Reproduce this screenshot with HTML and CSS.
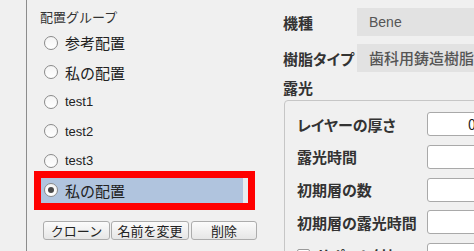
FILE: index.html
```html
<!DOCTYPE html>
<html lang="ja">
  <head>
    <meta charset="UTF-8" />
    <title>配置グループ</title>
    <link rel="stylesheet" href="styles.css">
  </head>
  <body>
    <div class="app">
      <!-- 左端の枠線 -->
      <div class="rail"></div>

      <!-- 配置グループ -->
      <section class="groups">
        <h2 class="groups-title">配置グループ</h2>
        <ul class="group-list">
          <li class="group-item"><span class="radio"></span><span class="ja">参考配置</span></li>
          <li class="group-item"><span class="radio"></span><span class="ja">私の配置</span></li>
          <li class="group-item"><span class="radio"></span><span class="en">test1</span></li>
          <li class="group-item"><span class="radio"></span><span class="en">test2</span></li>
          <li class="group-item"><span class="radio"></span><span class="en">test3</span></li>
          <li class="group-item selected">
            <div class="hl"><span class="radio checked"></span><span class="ja">私の配置</span></div>
          </li>
        </ul>
        <div class="buttons">
          <button class="btn btn-clone">クローン</button>
          <button class="btn btn-rename">名前を変更</button>
          <button class="btn btn-delete">削除</button>
        </div>
      </section>

      <!-- 設定 -->
      <section class="settings">
        <div class="row">
          <span class="label">機種</span>
          <div class="field field-en">Bene</div>
        </div>
        <div class="row">
          <span class="label">樹脂タイプ</span>
          <div class="field">歯科用鋳造樹脂</div>
        </div>
        <div class="section-title">露光</div>
        <div class="groupbox">
          <div class="param">
            <span class="plabel">レイヤーの厚さ</span>
            <div class="input">0.05</div>
          </div>
          <div class="param">
            <span class="plabel">露光時間</span>
            <div class="input"></div>
          </div>
          <div class="param">
            <span class="plabel">初期層の数</span>
            <div class="input"></div>
          </div>
          <div class="param">
            <span class="plabel">初期層の露光時間</span>
            <div class="input"></div>
          </div>
          <div class="param">
            <span class="plabel"><span class="check"></span>サポート付加</span>
            <div class="input"></div>
          </div>
        </div>
      </section>
    </div>
  </body>
</html>
```

FILE: styles.css
```css
/* 清除默认样式 */
* {
  margin: 0;
  padding: 0;
  box-sizing: border-box;
}
li {
  list-style: none;
}
body {
  width: 474px;
  height: 251px;
  overflow: hidden;
  background: #f0f0f0;
  font-family: "Noto Sans CJK JP", "Liberation Sans", sans-serif;
  color: #222;
}

.app {
  display: flex;
  height: 251px;
}

.rail {
  width: 27px;
  flex: none;
  border-right: 1px solid #8c8c8c;
}

/* 配置グループ */
.groups {
  width: 243px;
  flex: none;
  padding: 8px 0 0 13px;
}
.groups-title {
  font-size: 13px;
  font-weight: normal;
  line-height: 17px;
  color: #333;
}
.group-list {
  margin: 5px 0 0 1px;
  display: flex;
  flex-direction: column;
  gap: 4.5px;
}
.group-item {
  height: 25px;
  width: 207px;
  padding-left: 3px;
  display: flex;
  align-items: center;
  gap: 7px;
  font-size: 15px;
  color: #222;
}
.group-item .en {
  font-family: "Liberation Sans", sans-serif;
  font-size: 13px;
}
.radio {
  width: 14px;
  height: 14px;
  flex: none;
  border: 1px solid #8a8a8a;
  border-radius: 50%;
  background: linear-gradient(#f4f4f4, #ffffff);
}
.radio.checked {
  display: flex;
  align-items: center;
  justify-content: center;
}
.radio.checked::after {
  content: "";
  width: 6px;
  height: 6px;
  border-radius: 50%;
  background: #4a4a4a;
}

.group-item.selected {
  padding: 0 5px 0 0;
  background: #e8ecf0;
  outline: 7px solid #ff0000;
}
.hl {
  height: 25px;
  flex: 1;
  padding-left: 3px;
  display: flex;
  align-items: center;
  gap: 7px;
  background: #b0c4de;
}

.buttons {
  margin: 18px 0 0 3px;
  display: flex;
}
.btn {
  height: 19px;
  font-family: inherit;
  font-size: 13px;
  line-height: 17px;
  color: #222;
  border: 1px solid #acacac;
  border-radius: 3px;
  background: linear-gradient(#fbfbfb, #e6e6e6);
}
.btn-clone {
  width: 67px;
}
.btn-rename {
  width: 78px;
  margin-left: 1px;
}
.btn-delete {
  width: 66px;
  margin-left: 2px;
}

/* 設定 */
.settings {
  width: 320px;
  flex: none;
  padding: 8px 0 0 13px;
  font-feature-settings: "palt";
}
.row {
  display: flex;
  align-items: center;
  height: 28px;
  margin-bottom: 8px;
}
.label {
  width: 74px;
  flex: none;
  font-size: 15px;
  font-weight: bold;
  color: #333;
}
.field {
  flex: 1;
  height: 28px;
  line-height: 28px;
  padding-left: 12px;
  background: #e2e2e2;
  color: #555;
  font-size: 15px;
  font-weight: 500;
  white-space: nowrap;
  overflow: hidden;
}
.field-en {
  font-family: "Liberation Sans", sans-serif;
  font-size: 14px;
}
.section-title {
  font-size: 15px;
  font-weight: bold;
  color: #333;
  height: 18px;
  line-height: 18px;
  margin-top: -1px;
}
.groupbox {
  margin: 3px 0 0 1px;
  height: 200px;
  border: 1px solid #c6c6c6;
  border-radius: 4px;
  padding: 11px 0 0 12px;
  display: flex;
  flex-direction: column;
  gap: 8.75px;
}
.param {
  display: flex;
  align-items: center;
  height: 24px;
}
.plabel {
  width: 130px;
  flex: none;
  font-size: 15px;
  font-weight: bold;
  color: #333;
  display: flex;
  align-items: center;
  gap: 6px;
  white-space: nowrap;
}
.input {
  flex: 1;
  height: 24px;
  border: 1px solid #a9a9a9;
  border-radius: 3px;
  background: #fff;
  padding-left: 40px;
  font-size: 14px;
  line-height: 22px;
  color: #222;
}
.check {
  width: 13px;
  height: 13px;
  border: 1px solid #9a9a9a;
  border-radius: 2px;
  background: #fff;
}
```
